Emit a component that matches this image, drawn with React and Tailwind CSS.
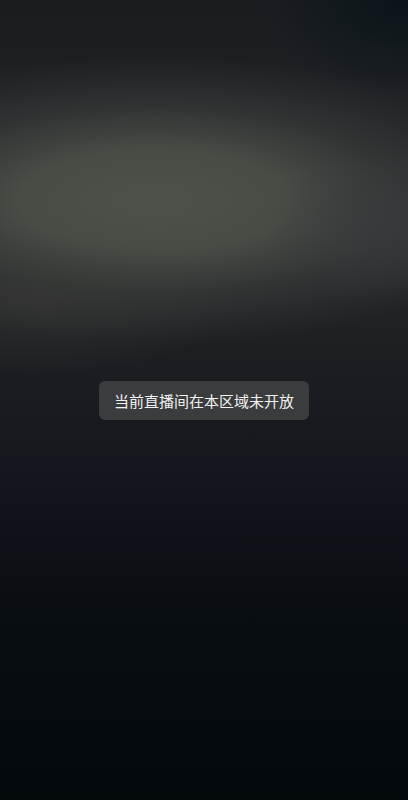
import React from "react";

// Region-locked live room: blurred dark backdrop with a centred toast
const App = () => {
  return (
    <div
      className="relative flex h-[800px] w-full items-center justify-center overflow-hidden bg-[linear-gradient(180deg,#1a1c20_0%,#1f2125_15%,#25272a_30%,#1c1e22_45%,#13161c_60%,#0a0e13_75%,#04090c_100%)]"
      style={{ fontFamily: '"Noto Sans CJK SC", "Noto Sans", sans-serif' }}
    >
      {/* main blurred glow band */}
      <div className="absolute inset-0 bg-[radial-gradient(ellipse_95%_18%_at_38%_25%,rgba(76,81,74,1)_0%,rgba(73,78,71,0.95)_35%,rgba(60,63,60,0.6)_65%,rgba(40,42,44,0)_100%)]" />
      {/* soft grey patch on the right */}
      <div className="absolute inset-0 bg-[radial-gradient(ellipse_30%_10%_at_95%_28%,rgba(58,58,62,0.7)_0%,rgba(50,50,54,0)_100%)]" />
      {/* lower warm residue on the left */}
      <div className="absolute inset-0 bg-[radial-gradient(ellipse_50%_9%_at_8%_38%,rgba(60,60,56,0.45)_0%,rgba(50,50,48,0)_100%)]" />
      {/* darker top-right corner */}
      <div className="absolute inset-0 bg-[radial-gradient(ellipse_35%_12%_at_100%_0%,rgba(8,20,24,0.9)_0%,rgba(8,20,24,0)_100%)]" />

      <div className="relative flex h-[39px] items-center rounded-md bg-[#3b3c3d] px-[15px]">
        <span className="text-[15px] leading-none text-[#f2f2f2]">
          当前直播间在本区域未开放
        </span>
      </div>
    </div>
  );
};

export default App;
